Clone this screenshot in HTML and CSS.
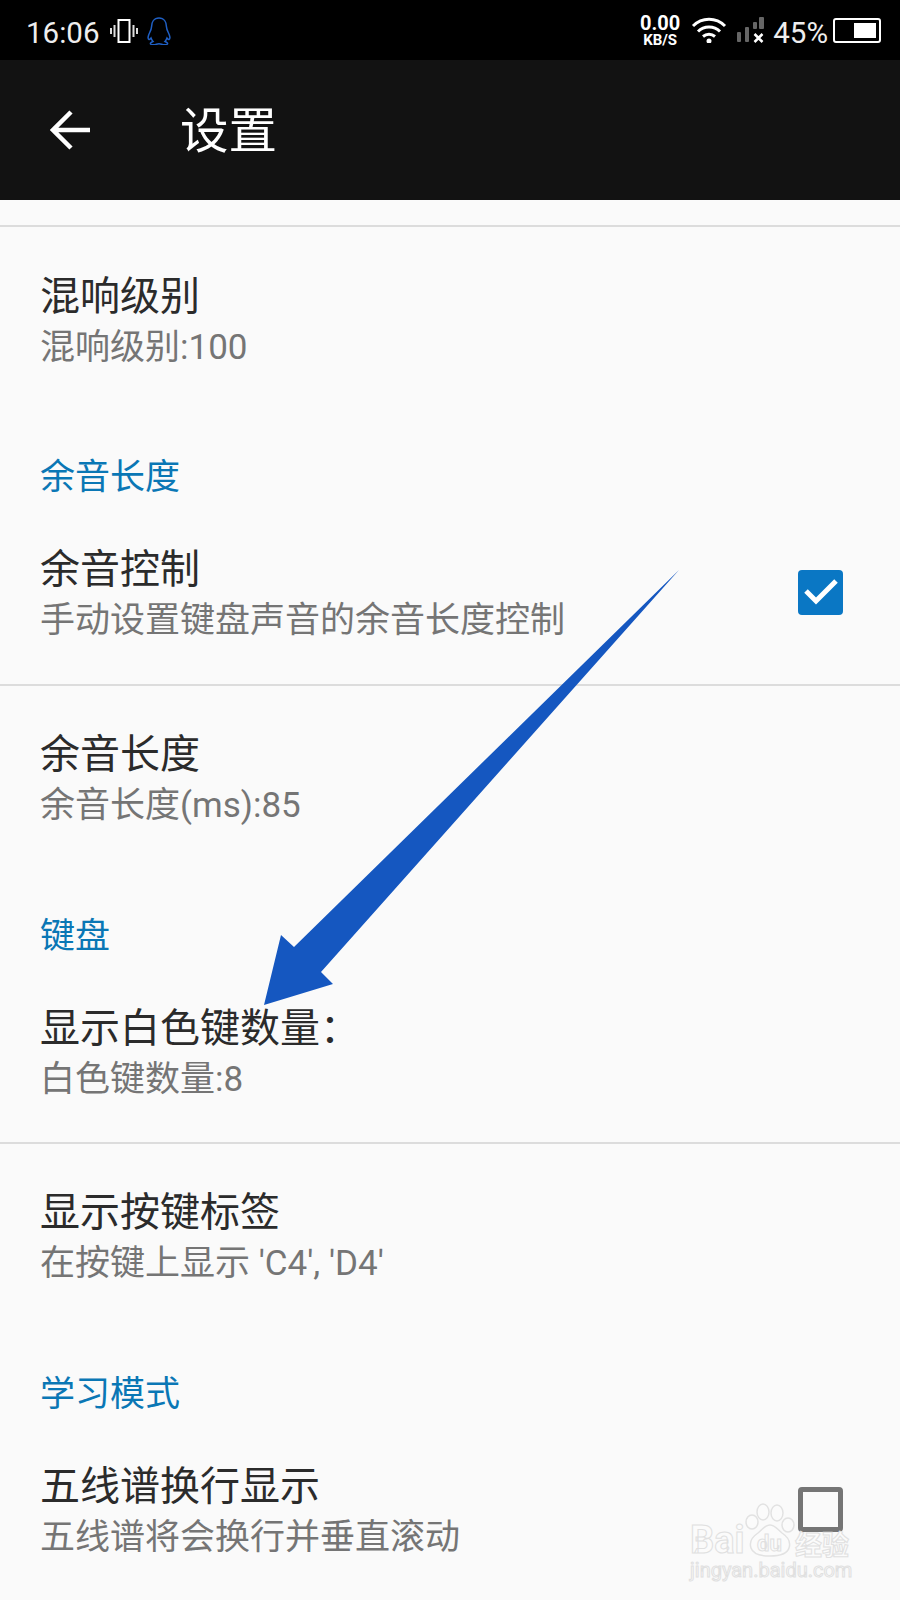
FILE: index.html
```html
<!DOCTYPE html>
<html lang="zh-CN">
<head>
    <meta charset="UTF-8">
    <meta name="viewport" content="width=device-width, initial-scale=1.0">
    <title>设置</title>
    <link rel="stylesheet" href="styles.css">
</head>
<body>
    <div class="statusbar">
        <div class="status-left">
            <span class="clock">16:06</span>
            <svg class="icon-vibrate" width="28" height="24" viewBox="0 0 28 24">
                <rect x="8.5" y="1" width="11" height="22" fill="none" stroke="#fff" stroke-width="2"/>
                <path d="M4.5 6v12M1 9v6M23.5 6v12M27 9v6" stroke="#ddd" stroke-width="2" fill="none"/>
            </svg>
            <svg class="icon-qq" width="26" height="28" viewBox="0 0 26 28">
                <path d="M13 1c-5 0-7.500 4-7.500 9 0 2-.5 3-2 6-1.500 3-2 6-.5 6.500 1 .2 1.500-1 2-1.500.5 1.500 1 2.500 2 3.500-1.500.5-3 1.500-2.500 2.500.5 1 4 1 6 .2 1.500-.5 3.500-.5 5 0 2 .8 5.500.8 6-.2.5-1-1-2-2.500-2.500 1-1 1.500-2 2-3.500.5.500 1 1.700 2 1.500 1.500-.5 1-3.500-.5-6.500-1.500-3-2-4-2-6 0-5-2.500-9-7.500-9z" fill="none" stroke="#1f5fc4" stroke-width="1.500"/>
            </svg>
        </div>
        <div class="status-right">
            <div class="netspeed">
                <span class="netspeed-value">0.00</span>
                <span class="netspeed-unit">KB/S</span>
            </div>
            <svg class="icon-wifi" width="36" height="26" viewBox="0 0 36 26">
                <path d="M2 9c9-9 23-9 32 0M7 14.500c6-6 16-6 22 0M12 19.500c3.500-3 8.500-3 12 0" fill="none" stroke="#fff" stroke-width="3"/>
                <circle cx="18" cy="24" r="2.500" fill="#fff"/>
            </svg>
            <svg class="icon-signal" width="28" height="26" viewBox="0 0 28 26">
                <rect x="0" y="15" width="4" height="10" rx="1" fill="#666"/>
                <rect x="8" y="10" width="4" height="15" rx="1" fill="#666"/>
                <rect x="16" y="5" width="4" height="7" rx="1" fill="#666"/>
                <rect x="22" y="0" width="5" height="12" rx="1" fill="#666"/>
                <path d="M17.500 17l8 8M25.500 17l-8 8" stroke="#fff" stroke-width="2.500"/>
            </svg>
            <span class="battery-text">45%</span>
            <div class="battery"><div class="battery-level"></div></div>
        </div>
    </div>

    <header class="toolbar">
        <svg class="back" width="42" height="42" viewBox="0 0 42 42">
            <path d="M2 21h38M21 3L3 21l18 18" fill="none" stroke="#fff" stroke-width="4.500"/>
        </svg>
        <h1>设置</h1>
    </header>

    <main class="prefs">
        <div class="pref pref-first">
            <div>
                <div class="pref-title">混响级别</div>
                <div class="pref-sub">混响级别:100</div>
            </div>
        </div>
        <div class="section">余音长度</div>
        <div class="pref pref-line pref-line-first">
            <div>
                <div class="pref-title">余音控制</div>
                <div class="pref-sub">手动设置键盘声音的余音长度控制</div>
            </div>
            <div class="check checked">
                <svg width="46" height="46" viewBox="0 0 46 46">
                    <path d="M8 21l10 10L38 11" fill="none" stroke="#fff" stroke-width="5"/>
                </svg>
            </div>
        </div>
        <div class="pref">
            <div>
                <div class="pref-title">余音长度</div>
                <div class="pref-sub">余音长度(ms):85</div>
            </div>
        </div>
        <div class="section">键盘</div>
        <div class="pref pref-line">
            <div>
                <div class="pref-title">显示白色键数量：</div>
                <div class="pref-sub">白色键数量:8</div>
            </div>
        </div>
        <div class="pref">
            <div>
                <div class="pref-title">显示按键标签</div>
                <div class="pref-sub">在按键上显示 'C4', 'D4'</div>
            </div>
        </div>
        <div class="section">学习模式</div>
        <div class="pref">
            <div>
                <div class="pref-title">五线谱换行显示</div>
                <div class="pref-sub">五线谱将会换行并垂直滚动</div>
            </div>
            <div class="check check-last"></div>
        </div>
    </main>

    <!-- arrow drawn on top of the screenshot -->
    <svg class="arrow" width="900" height="1600" viewBox="0 0 900 1600">
        <polygon points="679,570 321,972 333,984 264,1005 281,935 294,947" fill="#1557c0"/>
    </svg>

    <div class="watermark">
        <svg class="paw" width="50" height="54" viewBox="0 0 50 54">
            <g fill="#fbfbfb" stroke="#e2e2e2" stroke-width="1.500">
                <ellipse cx="7" cy="19" rx="6" ry="7"/>
                <ellipse cx="18" cy="9" rx="6" ry="8"/>
                <ellipse cx="32" cy="10" rx="6" ry="8"/>
                <ellipse cx="43" cy="22" rx="6" ry="7"/>
                <path d="M25 22c-5 0-7 4-12 8-6 4-9 9-7 15 2 6 8 8 19 8s17-2 19-8c2-6-1-11-7-15-5-4-7-8-12-8z"/>
            </g>
        </svg>
        <span class="wm-bai">Bai</span>
        <span class="wm-du">du</span>
        <span class="wm-cn">经验</span>
        <span class="wm-url">jingyan.baidu.com</span>
    </div>
</body>
</html>
```

FILE: styles.css
```css
* {
    box-sizing: border-box;
}
body {
    margin: 0;
    width: 900px;
    height: 1600px;
    overflow: hidden;
    position: relative;
    background: #fafafa;
    font-family: Roboto, "Noto Sans CJK SC", sans-serif;
    color: #2b2b2b;
}
.statusbar {
    height: 60px;
    background: #000;
    color: #fff;
    display: flex;
    align-items: center;
    justify-content: space-between;
    padding: 0 19px 0 26px;
}
.status-left, .status-right {
    display: flex;
    align-items: center;
}
.clock {
    font-size: 29.500px;
    margin-right: 11px;
    padding-top: 5px;
    color: #eee;
}
.icon-vibrate, .icon-qq {
    margin-top: 2px;
}
.icon-qq {
    margin-left: 8px;
}
.netspeed {
    display: flex;
    flex-direction: column;
    align-items: center;
    font-weight: bold;
    margin-right: 11px;
    padding-top: 2px;
}
.netspeed-value {
    font-size: 20px;
    line-height: 18px;
}
.netspeed-unit {
    font-size: 15px;
    line-height: 16px;
}
.icon-signal {
    margin-left: 10px;
}
.battery-text {
    font-size: 29.500px;
    margin-left: 8px;
    padding-top: 5px;
    color: #eee;
}
.battery {
    width: 48px;
    height: 25px;
    margin-left: 5px;
    border: 2px solid #fff;
    border-radius: 3px;
    padding: 3px;
    display: flex;
    justify-content: flex-end;
}
.battery-level {
    width: 22px;
    background: #fff;
}
.toolbar {
    height: 140px;
    background: #121212;
    color: #fff;
    display: flex;
    align-items: center;
    padding-left: 50px;
}
.toolbar h1 {
    margin: 0 0 6px 88px;
    font-size: 48.500px;
    font-weight: 400;
}
.prefs {
    padding-top: 25px;
}
.prefs::before {
    content: "";
    display: block;
    height: 2px;
    background: #dcdcdc;
}
.pref {
    display: flex;
    align-items: center;
    justify-content: space-between;
    padding: 44px 57px 38px 40px;
}
.pref-first {
    padding: 45px 57px 37px 40px;
}
.pref-line {
    border-bottom: 2px solid #dcdcdc;
    padding-bottom: 36px;
}
.pref-line-first {
    padding-bottom: 37px;
}
.pref-title {
    font-size: 40px;
    line-height: 50px;
}
.pref-sub {
    font-size: 35px;
    line-height: 52px;
    color: #757575;
}
.section {
    padding: 43px 40px 0;
    font-size: 35px;
    line-height: 47px;
    color: #0a77b5;
}
.check {
    width: 45px;
    height: 45px;
    margin-bottom: 8px;
    border: 5px solid #757575;
    border-radius: 4px;
}
.check-last {
    margin-bottom: 8px;
}
.check.checked {
    border: 0;
    background: #0a77c4;
}
.check svg {
    display: block;
}
.arrow {
    position: absolute;
    top: 0;
    left: 0;
}
.watermark {
    position: absolute;
    left: 685px;
    top: 1500px;
    width: 175px;
    height: 85px;
    font-weight: bold;
    color: #fbfbfb;
    -webkit-text-stroke: 1px #e0e0e0;
}
.watermark span {
    position: absolute;
}
.paw {
    position: absolute;
    left: 60px;
    top: 3px;
}
.wm-bai {
    left: 5px;
    top: 18px;
    font-size: 38px;
    line-height: 44px;
}
.wm-du {
    left: 72px;
    top: 31px;
    font-size: 22px;
    line-height: 26px;
}
.wm-cn {
    left: 110px;
    top: 33px;
    font-size: 27px;
    line-height: 27px;
}
.wm-url {
    left: 5px;
    top: 60px;
    font-size: 20px;
    line-height: 20px;
    font-weight: 400;
}
```
